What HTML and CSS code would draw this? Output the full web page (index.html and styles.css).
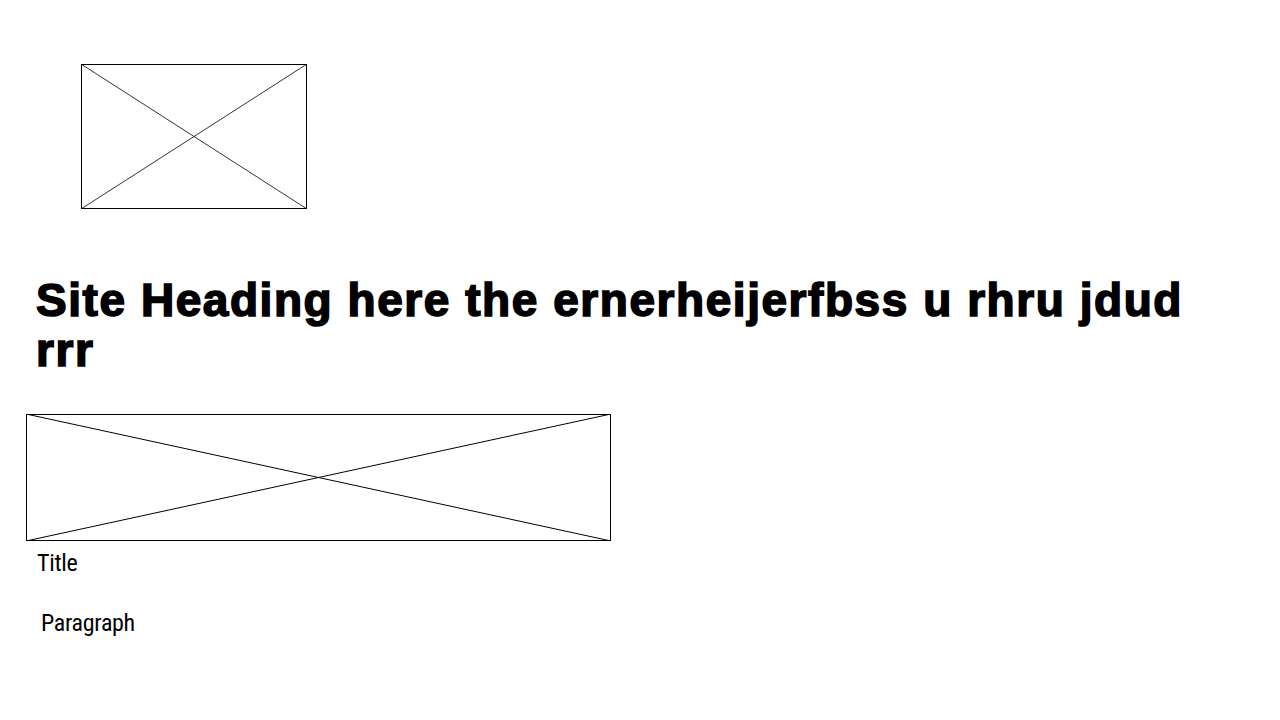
FILE: index.html
```html
<!DOCTYPE html>
<html>
<head>
<meta charset="utf-8">
<link rel="stylesheet" href="styles.css">
</head>
<body>
<div class="page">
  <header class="site-header">
    <svg class="ph ph-logo" viewBox="0 0 226 145" preserveAspectRatio="none">
      <rect x="0.5" y="0.5" width="225" height="144" fill="none" stroke="#000" stroke-width="1"/>
      <line x1="0" y1="0" x2="226" y2="145" stroke="#000" stroke-width="0.8"/>
      <line x1="226" y1="0" x2="0" y2="145" stroke="#000" stroke-width="0.8"/>
    </svg>
  </header>
  <h1 class="site-heading">Site Heading here the ernerheijerfbss u rhru jdud rrr</h1>
  <section class="card">
    <svg class="ph ph-card" viewBox="0 0 585 127" preserveAspectRatio="none">
      <rect x="0.5" y="0.5" width="584" height="126" fill="none" stroke="#000" stroke-width="1"/>
      <line x1="0" y1="0" x2="585" y2="127" stroke="#000" stroke-width="1"/>
      <line x1="585" y1="0" x2="0" y2="127" stroke="#000" stroke-width="1"/>
    </svg>
    <div class="card-title">Title</div>
    <p class="card-text">Paragraph</p>
  </section>
</div>
</body>
</html>
```
FILE: styles.css
```css
html, body {
  margin: 0;
  padding: 0;
  background: #fff;
  color: #000;
}
.page {
  width: 1280px;
  height: 720px;
  overflow: hidden;
  display: flex;
  flex-direction: column;
}
.ph {
  display: block;
}
.site-header {
  padding: 64px 0 0 81px;
}
.ph-logo {
  width: 226px;
  height: 145px;
}
.site-heading {
  margin: 66px 0 0 36px;
  font-family: "Liberation Sans", Arial, sans-serif;
  font-weight: 700;
  font-size: 46px;
  line-height: 50px;
  letter-spacing: 1.55px;
  -webkit-text-stroke: 1.6px #000;
  width: 1180px;
}
.card {
  margin: 39px 0 0 26px;
}
.ph-card {
  width: 585px;
  height: 127px;
}
.card-title {
  margin: 8px 0 0 11px;
  font-family: "Roboto Condensed", "DejaVu Sans Condensed", "Liberation Sans Narrow", sans-serif;
  font-stretch: condensed;
  font-size: 24px;
  line-height: 28px;
  letter-spacing: -0.3px;
}
.card-text {
  margin: 32px 0 0 15px;
  font-family: "Roboto Condensed", "DejaVu Sans Condensed", "Liberation Sans Narrow", sans-serif;
  font-stretch: condensed;
  font-size: 24px;
  line-height: 28px;
  letter-spacing: -0.3px;
}
```
